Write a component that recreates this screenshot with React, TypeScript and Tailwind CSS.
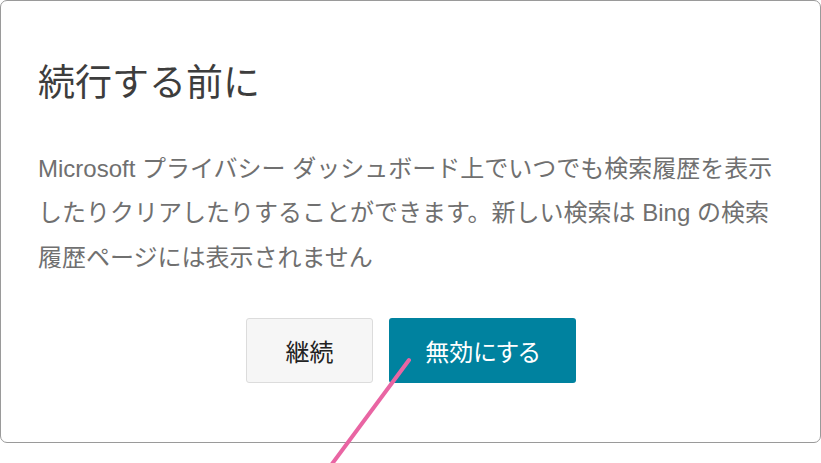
import React from "react";

export default function App() {
  return (
    <div className="relative w-[821px] h-[463px] bg-white overflow-hidden [font-family:'Liberation_Sans','Noto_Sans_CJK_JP',sans-serif]">
      <div className="w-[821px] h-[443px] border border-[#9a9a9a] rounded-[7px] bg-white pt-[57px] px-[37px] flex flex-col">
        <h1 className="text-[37px] leading-[44px] text-[#3d3d3d] font-normal [font-family:'Noto_Sans_CJK_JP',sans-serif]">
          続行する前に
        </h1>
        <p className="mt-[44.5px] text-[24px] leading-[44.5px] text-[#707070]">
          Microsoft プライバシー ダッシュボード上でいつでも検索履歴を表示したりクリアしたりすることができます。新しい検索は Bing の検索履歴ページには表示されません
        </p>
        <div className="mt-[38px] flex justify-center gap-[16px] pl-[1px]">
          <button className="w-[127px] h-[65px] rounded-[3px] border border-[#dcdcdc] bg-[#f6f6f6] text-[24px] text-[#222] [font-family:'Noto_Sans_CJK_JP',sans-serif]">
            継続
          </button>
          <button className="w-[187px] h-[65px] rounded-[3px] bg-[#00829f] text-[24px] text-white [font-family:'Noto_Sans_CJK_JP',sans-serif] [font-feature-settings:'palt']">
            無効にする
          </button>
        </div>
      </div>
      <svg
        className="absolute left-0 top-0 pointer-events-none"
        width="821"
        height="463"
        viewBox="0 0 821 463"
      >
        <line
          x1="409"
          y1="360"
          x2="329"
          y2="468"
          stroke="#e965a3"
          strokeWidth="4"
          strokeLinecap="round"
        />
      </svg>
    </div>
  );
}
